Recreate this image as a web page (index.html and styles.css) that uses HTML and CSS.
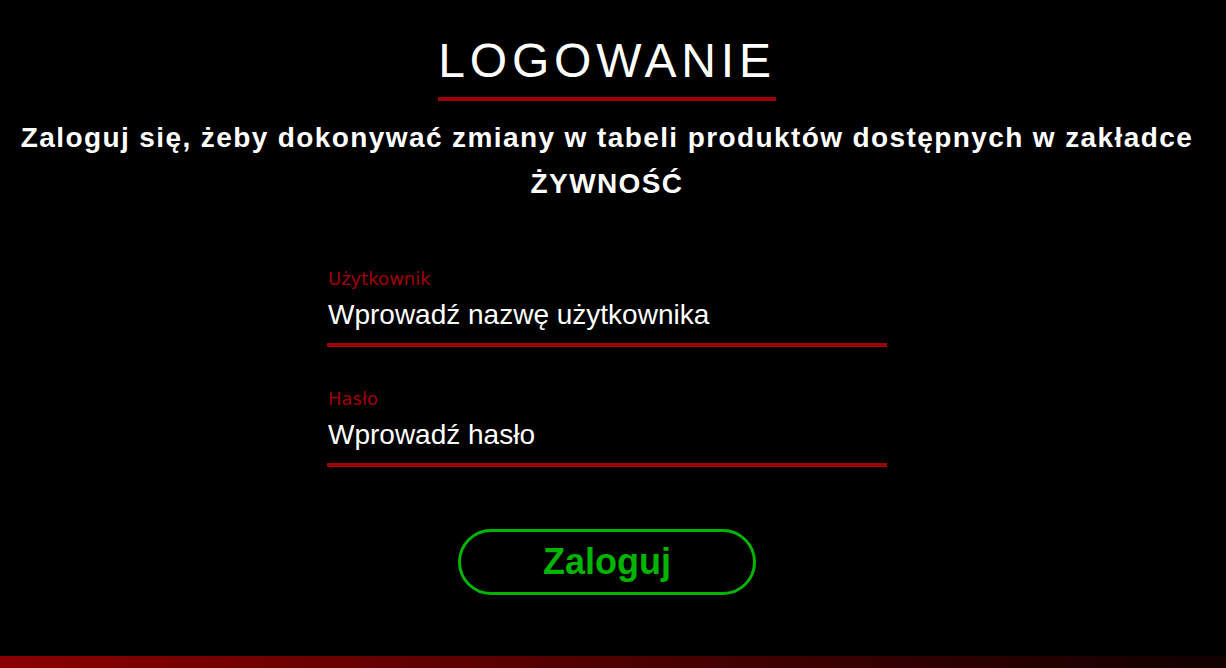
FILE: index.html
```html
<!DOCTYPE html>
<html lang="pl">
<head>
<meta charset="utf-8">
<title>Logowanie</title>
<link rel="stylesheet" href="styles.css">
</head>
<body>
<main class="page">
  <h1 class="title">LOGOWANIE</h1>
  <p class="subtitle">Zaloguj się, żeby dokonywać zmiany w tabeli produktów dostępnych w zakładce ŻYWNOŚĆ</p>
  <form class="form">
    <div class="field">
      <label class="label" for="user">Użytkownik</label>
      <input class="input" id="user" type="text" placeholder="Wprowadź nazwę użytkownika">
    </div>
    <div class="field">
      <label class="label" for="pass">Hasło</label>
      <input class="input" id="pass" type="password" placeholder="Wprowadź hasło">
    </div>
    <button class="button" type="button">Zaloguj</button>
  </form>
</main>
<footer class="footer"></footer>
</body>
</html>
```
FILE: styles.css
```css
html, body {
  margin: 0;
  padding: 0;
  background: #000;
}
body {
  min-height: 100vh;
  display: flex;
  flex-direction: column;
  font-family: "Liberation Sans", Arial, sans-serif;
  color: #fff;
  overflow: hidden;
}
.page {
  flex: 1;
  display: flex;
  flex-direction: column;
  align-items: center;
  margin-right: 12px;
}
.title {
  margin: 33px 0 0;
  padding: 0 0 9px;
  font-size: 48px;
  line-height: 55px;
  font-weight: normal;
  letter-spacing: 4.8px;
  border-bottom: 4px solid #a00000;
}
.subtitle {
  margin: 14px 0 0;
  font-size: 28px;
  line-height: 46px;
  font-weight: bold;
  letter-spacing: 1.4px;
  text-align: center;
}
.form {
  display: flex;
  flex-direction: column;
  align-items: center;
  margin-top: 60px;
}
.field {
  width: 560px;
  display: flex;
  flex-direction: column;
  gap: 8px;
  margin-bottom: 40px;
}
.label {
  font-family: "Comic Sans MS", "DejaVu Sans", sans-serif;
  font-size: 18px;
  line-height: 24px;
  color: #a00000;
  padding-left: 1px;
}
.input {
  font-family: "Liberation Sans", Arial, sans-serif;
  font-size: 28px;
  line-height: 32px;
  height: 48px;
  padding: 0 0 12px 1px;
  box-sizing: border-box;
  margin: 0;
  background: transparent;
  border: none;
  border-bottom: 4px solid #a00000;
  color: #fff;
  outline: none;
}
.input::placeholder {
  color: #fff;
  opacity: 1;
}
.button {
  margin-top: 22px;
  width: 298px;
  height: 66px;
  box-sizing: border-box;
  border: 3px solid #00b400;
  border-radius: 33px;
  background: transparent;
  color: #00b400;
  font-family: "Liberation Sans", Arial, sans-serif;
  font-size: 36px;
  font-weight: bold;
  line-height: 60px;
  padding: 0;
  cursor: pointer;
}
.footer {
  height: 12px;
  background: linear-gradient(to right, #8b0000, #100000);
}
```
